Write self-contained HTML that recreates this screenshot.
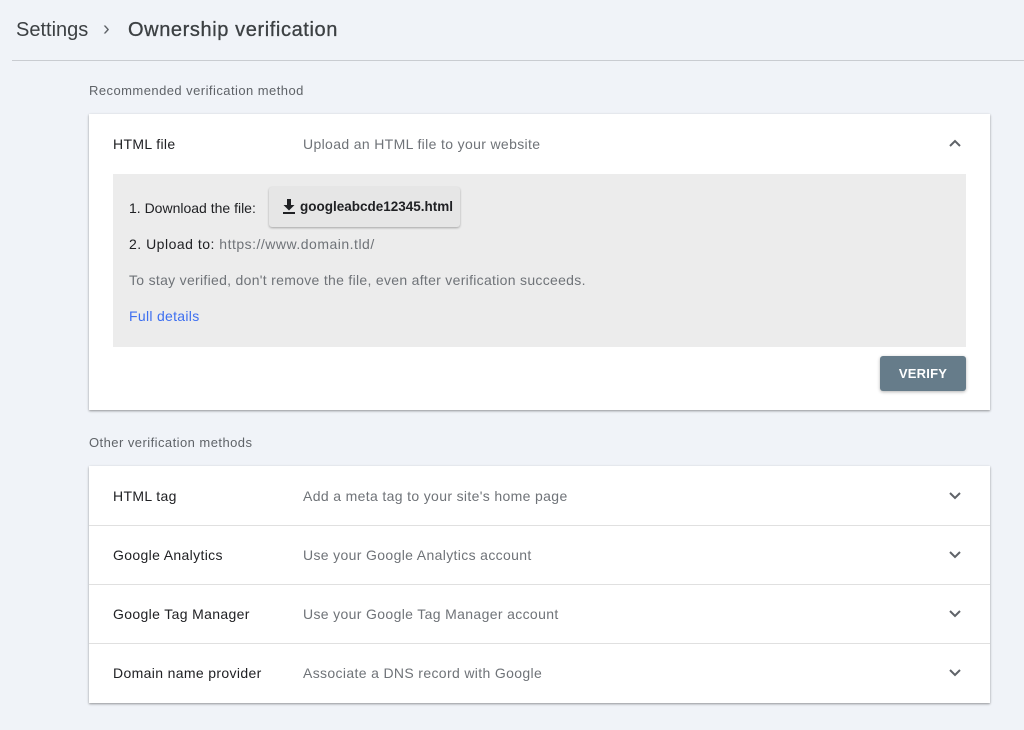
<!DOCTYPE html>
<html><head><meta charset="utf-8"><style>
*{margin:0;padding:0;box-sizing:border-box}
body{width:1024px;height:730px;background:#f0f3f8;font-family:"Liberation Sans",Arial,sans-serif;position:relative;overflow:hidden;color:#202124}
.a{position:absolute;white-space:nowrap}
.card{position:absolute;left:89px;width:901px;background:#fff;box-shadow:0 1px 2px rgba(0,0,0,.3),0 1px 3px rgba(0,0,0,.12)}
.lbl{font-size:14px;color:#202124;letter-spacing:.35px}
.desc{font-size:14px;color:#6f7378;letter-spacing:.35px}
.chev{position:absolute;left:948px;width:14px;height:10px}
.row{position:absolute;left:89px;width:901px;height:1px;background:#e0e0e0}
.sub{font-size:13px;color:#5f6368;letter-spacing:.45px}
</style></head><body>
<div class="a" style="left:16px;top:19px;font-size:20px;color:#3c4043">Settings</div>
<div class="a" style="left:103px;top:18px;font-size:20px;color:#5f6368">›</div>
<div class="a" style="left:128px;top:19px;font-size:20px;color:#3c4043;letter-spacing:.6px;-webkit-text-stroke:.3px #3c4043">Ownership verification</div>
<div class="a" style="left:12px;top:60px;width:1012px;height:1px;background:#c9ccd1"></div>
<div class="a sub" style="left:89px;top:83px">Recommended verification method</div>

<div class="card" style="top:114px;height:296px"></div>
<div class="a lbl" style="left:113px;top:136px">HTML file</div>
<div class="a desc" style="left:303px;top:136px">Upload an HTML file to your website</div>
<svg class="chev" style="top:138px" viewBox="0 0 14 10"><path d="M2 8 L7 3 L12 8" fill="none" stroke="#5f6368" stroke-width="2"/></svg>
<div class="a" style="left:113px;top:174px;width:853px;height:173px;background:#ececec"></div>
<div class="a" style="left:129px;top:200px;font-size:14px;color:#202124">1. Download the file:</div>
<div class="a" style="left:269px;top:187px;width:191px;height:40px;background:#e6e6e6;border-radius:3px;box-shadow:0 1px 2px rgba(0,0,0,.3)"></div>
<svg class="a" style="left:281px;top:198px" width="16" height="17" viewBox="0 0 16 17"><path d="M6 1h4v6h3.5L8 12.5 2.5 7H6z" fill="#202124"/><rect x="2" y="14" width="12" height="2" fill="#202124"/></svg>
<div class="a" style="left:300px;top:199px;font-size:13.5px;font-weight:bold;color:#202124">googleabcde12345.html</div>
<div class="a" style="left:129px;top:236px;font-size:14px;color:#202124;letter-spacing:.5px">2. Upload to: <span style="color:#6f7378">https://www.domain.tld/</span></div>
<div class="a" style="left:129px;top:272px;font-size:14px;color:#6f7378;letter-spacing:.3px">To stay verified, don't remove the file, even after verification succeeds.</div>
<div class="a" style="left:129px;top:308px;font-size:14px;color:#3d6ff0;letter-spacing:.3px">Full details</div>
<div class="a" style="left:880px;top:356px;width:86px;height:35px;background:#667c8a;border-radius:3px;box-shadow:0 1px 3px rgba(0,0,0,.3);color:#fff;font-size:13px;font-weight:bold;text-align:center;line-height:35px;letter-spacing:.2px">VERIFY</div>

<div class="a sub" style="left:89px;top:435px">Other verification methods</div>
<div class="card" style="top:466px;height:237px"></div>
<div class="row" style="top:525px"></div>
<div class="row" style="top:584px"></div>
<div class="row" style="top:643px"></div>

<div class="a lbl" style="left:113px;top:488px">HTML tag</div>
<div class="a desc" style="left:303px;top:488px">Add a meta tag to your site's home page</div>
<svg class="chev" style="top:491px" viewBox="0 0 14 10"><path d="M2 2 L7 7 L12 2" fill="none" stroke="#5f6368" stroke-width="2"/></svg>

<div class="a lbl" style="left:113px;top:547px">Google Analytics</div>
<div class="a desc" style="left:303px;top:547px">Use your Google Analytics account</div>
<svg class="chev" style="top:550px" viewBox="0 0 14 10"><path d="M2 2 L7 7 L12 2" fill="none" stroke="#5f6368" stroke-width="2"/></svg>

<div class="a lbl" style="left:113px;top:606px">Google Tag Manager</div>
<div class="a desc" style="left:303px;top:606px">Use your Google Tag Manager account</div>
<svg class="chev" style="top:609px" viewBox="0 0 14 10"><path d="M2 2 L7 7 L12 2" fill="none" stroke="#5f6368" stroke-width="2"/></svg>

<div class="a lbl" style="left:113px;top:665px">Domain name provider</div>
<div class="a desc" style="left:303px;top:665px">Associate a DNS record with Google</div>
<svg class="chev" style="top:668px" viewBox="0 0 14 10"><path d="M2 2 L7 7 L12 2" fill="none" stroke="#5f6368" stroke-width="2"/></svg>
</body></html>
